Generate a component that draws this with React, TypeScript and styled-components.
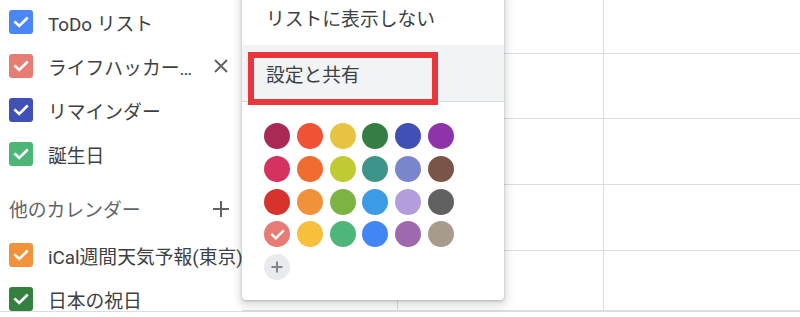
import React from "react";
import styled, { createGlobalStyle } from "styled-components";

const GlobalStyle = createGlobalStyle`
    html, body {
        margin: 0;
        padding: 0;
        background: #fff;
        overflow: hidden;
    }
    body {
        font-family: Roboto, "Noto Sans CJK JP", sans-serif;
        color: #3c4043;
    }
`;

const Page = styled.div`
    position: relative;
    width: 800px;
    height: 317px;
    overflow: hidden;
`;

const Main = styled.div`
    display: flex;
    height: 312px;
    border-bottom: 1px solid #dadce0;
    box-sizing: border-box;
`;

const Sidebar = styled.div`
    width: 242px;
    flex-shrink: 0;
    display: flex;
    flex-direction: column;
`;

const Row = styled.div`
    display: flex;
    align-items: center;
    height: 44px;
    padding-left: 9px;
    flex-shrink: 0;
`;

const Box = styled.span<{ $color: string }>`
    width: 24px;
    height: 24px;
    border-radius: 3px;
    background: ${(p) => p.$color};
    display: flex;
    align-items: center;
    justify-content: center;
    flex-shrink: 0;
`;

const Label = styled.span`
    margin-left: 15px;
    font-size: 18.8px;
    color: #3c4043;
    white-space: nowrap;
`;

const IconButton = styled.span`
    margin-left: auto;
    width: 20px;
    height: 20px;
    display: flex;
    align-items: center;
    justify-content: center;
    margin-right: 11px;
`;

const Header = styled.div`
    display: flex;
    align-items: center;
    height: 57px;
    padding: 8px 0 0 9px;
    box-sizing: border-box;
    flex-shrink: 0;
`;

const HeaderText = styled.span`
    font-size: 18.8px;
    color: #5f6368;
`;

const Grid = styled.div`
    flex: 1;
    display: grid;
    grid-template-columns: 156px 206px 1fr;
    grid-template-rows: 54px 65px 66px 66px 1fr;
`;

const Cell = styled.div<{ $last?: boolean }>`
    border-right: ${(p) => (p.$last ? "none" : "1px solid #dadce0")};
    border-bottom: 1px solid #dadce0;
`;

const Menu = styled.div`
    position: absolute;
    left: 242px;
    top: -10px;
    width: 262px;
    height: 310px;
    background: #fff;
    border-radius: 4px;
    box-shadow: 0 4px 8px 3px rgba(60, 64, 67, 0.15), 0 1px 3px rgba(60, 64, 67, 0.3);
    display: flex;
    flex-direction: column;
    z-index: 2;
`;

const MenuItem = styled.div<{ $active?: boolean }>`
    position: relative;
    height: ${(p) => (p.$active ? "56px" : "55px")};
    display: flex;
    align-items: center;
    padding-left: 24px;
    font-size: 18.8px;
    color: #3c4043;
    background: ${(p) => (p.$active ? "#f1f3f4" : "transparent")};
    border-bottom: ${(p) => (p.$active ? "1px solid #dadce0" : "none")};
    flex-shrink: 0;
`;

const Highlight = styled.div`
    position: absolute;
    left: 6px;
    top: 7px;
    width: 190px;
    height: 53px;
    border: 6px solid #e8363a;
    box-sizing: border-box;
    z-index: 3;
`;

const Palette = styled.div`
    display: grid;
    grid-template-columns: repeat(6, 26px);
    gap: 6.75px;
    padding: 21px 0 0 22px;
`;

const Swatch = styled.span<{ $color: string }>`
    width: 26px;
    height: 26px;
    border-radius: 50%;
    background: ${(p) => p.$color};
    display: flex;
    align-items: center;
    justify-content: center;
`;

const Check = ({ size = 16 }: { size?: number }) => (
    <svg width={size} height={size} viewBox="0 0 16 16">
        <path d="M2.3 8.3 L6.2 12 L13.8 4.4" fill="none" stroke="#fff" strokeWidth="2.6" strokeLinecap="square" />
    </svg>
);

const calendars = [
    { name: "ToDo リスト", color: "#4a86f5" },
    { name: "ライフハッカー…", color: "#e67c73", close: true },
    { name: "リマインダー", color: "#3f51b5" },
    { name: "誕生日", color: "#4cb677" },
];

const others = [
    { name: "iCal週間天気予報(東京)", color: "#f2933b" },
    { name: "日本の祝日", color: "#33803f" },
];

const colors = [
    "#a92a55", "#f05235", "#e4c441", "#357e43", "#3f51b5", "#8e33aa",
    "#d6325f", "#ef6b30", "#c0ca33", "#3e9488", "#7986cb", "#795548",
    "#d5332b", "#f09238", "#7cb342", "#3b9be5", "#b39ddb", "#616161",
    "#e67c73", "#f6bf3c", "#4fb679", "#4285f4", "#9e69af", "#a79b8e",
];

export default function App() {
    return (
        <Page>
            <GlobalStyle />
            <Main>
                <Sidebar>
                    {calendars.map((c) => (
                        <Row key={c.name}>
                            <Box $color={c.color}><Check /></Box>
                            <Label>{c.name}</Label>
                            {c.close && (
                                <IconButton>
                                    <svg width="16" height="16" viewBox="0 0 16 16">
                                        <path d="M2 2 L14 14 M14 2 L2 14" stroke="#5f6368" strokeWidth="2" />
                                    </svg>
                                </IconButton>
                            )}
                        </Row>
                    ))}
                    <Header>
                        <HeaderText>他のカレンダー</HeaderText>
                        <IconButton>
                            <svg width="18" height="18" viewBox="0 0 18 18">
                                <path d="M9 1 V17 M1 9 H17" stroke="#5f6368" strokeWidth="2" />
                            </svg>
                        </IconButton>
                    </Header>
                    {others.map((c) => (
                        <Row key={c.name}>
                            <Box $color={c.color}><Check /></Box>
                            <Label>{c.name}</Label>
                        </Row>
                    ))}
                </Sidebar>
                <Grid>
                    {Array.from({ length: 15 }).map((_, i) => (
                        <Cell key={i} $last={i % 3 === 2} />
                    ))}
                </Grid>
            </Main>
            <Menu>
                <MenuItem>リストに表示しない</MenuItem>
                <MenuItem $active>
                    設定と共有
                    <Highlight />
                </MenuItem>
                <Palette>
                    {colors.map((c, i) => (
                        <Swatch key={c} $color={c}>{i === 18 && <Check size={15} />}</Swatch>
                    ))}
                    <Swatch $color="#e8eaed">
                        <svg width="14" height="14" viewBox="0 0 14 14">
                            <path d="M7 1.5 V12.5 M1.5 7 H12.5" stroke="#80868b" strokeWidth="2" />
                        </svg>
                    </Swatch>
                </Palette>
            </Menu>
        </Page>
    );
}
